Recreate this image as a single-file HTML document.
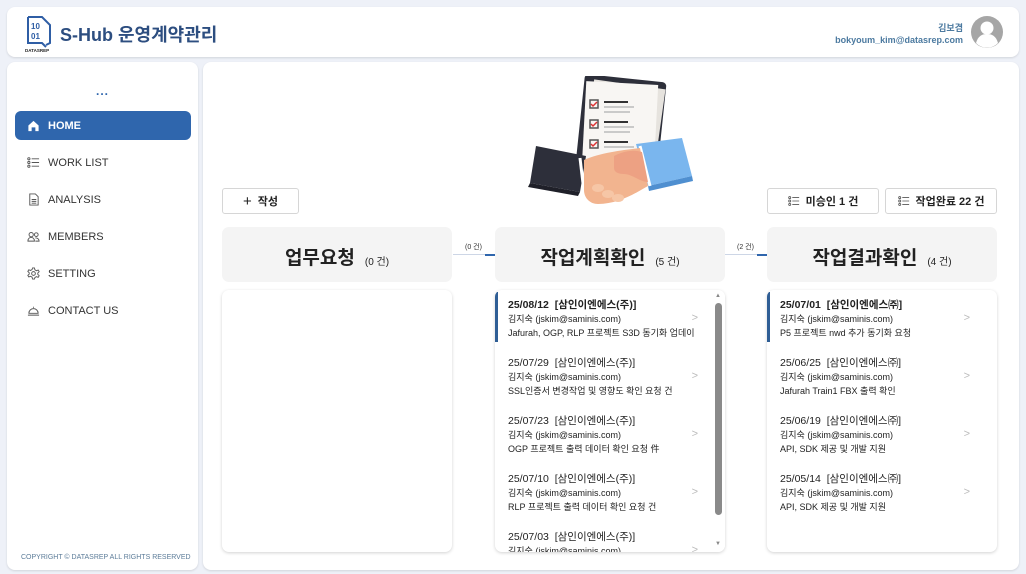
<!DOCTYPE html>
<html><head><meta charset="utf-8"><style>
*{box-sizing:border-box;margin:0;padding:0}
body{width:1026px;height:574px;background:#eef1f8;font-family:"Liberation Sans","Noto Sans CJK KR",sans-serif;position:relative;overflow:hidden;color:#222}
.card{position:absolute;background:#fff;border-radius:8px;box-shadow:0 1px 2px rgba(0,0,0,.12)}
.abs{position:absolute}
.nav{position:absolute;left:15px;width:176px;height:29px;display:flex;align-items:center;padding-left:12px;font-size:11px;color:#333;gap:8px}
.nav.on{background:#2f66ad;color:#fff;border-radius:6px;font-weight:bold}
.nav svg{width:13px;height:13px}
.btn{position:absolute;height:26px;border:1px solid #d6d6d6;border-radius:3px;background:#fff;display:flex;align-items:center;justify-content:center;font-size:11px;font-weight:bold;gap:6px}
.colh{position:absolute;width:230px;height:55px;background:#f4f4f4;border-radius:7px;display:flex;align-items:center;justify-content:center;font-size:19px;font-weight:bold;gap:10px;padding-top:4px}
.colh small{font-size:10px;font-weight:normal;margin-top:8px}
.list{position:absolute;width:230px;height:262px;top:290px;background:#fff;border-radius:7px;box-shadow:0 1px 3px rgba(0,0,0,.18);overflow:hidden}
.it{position:absolute;left:0;width:215px;height:58px;padding-left:13px;font-size:9px;color:#222}
.it b{font-size:10.5px;font-weight:normal}
.it .d{margin-top:8px;font-size:10.5px}
.it div{line-height:14px;white-space:nowrap;overflow:hidden}
.chev{position:absolute;right:12px;top:22px;color:#bbb;font-size:11px}
.cnt{position:absolute;font-size:7px;color:#333}
.ln{position:absolute;height:1px;background:#cdd6e6}
.ln i{position:absolute;right:0;top:-0.5px;width:10px;height:2px;background:#2f66ad}
</style></head><body>
<div class="card" style="left:7px;top:7px;width:1012px;height:50px">
 <svg class="abs" style="left:17px;top:8px" width="30" height="38" viewBox="0 0 30 38"><path d="M4 2h14l8 8v18l-4 2" fill="none" stroke="#2f5ea5" stroke-width="2"/><path d="M4 2v26h14l4 4" fill="none" stroke="#2f5ea5" stroke-width="2"/><text x="7" y="14" font-size="8" font-weight="bold" fill="#2f5ea5" font-family="Liberation Sans">10</text><text x="7" y="24" font-size="8" font-weight="bold" fill="#2f5ea5" font-family="Liberation Sans">01</text><text x="1" y="37" font-size="4.5" font-weight="bold" fill="#222" font-family="Liberation Sans">DATASREP</text></svg>
 <div class="abs" style="left:53px;top:14px;font-size:18px;font-weight:bold;color:#2d4e80">S-Hub 운영계약관리</div>
 <div class="abs" style="right:56px;top:15px;text-align:right;font-size:9px;font-weight:bold;color:#4c7aa0;line-height:12px">김보겸<br>bokyoum_kim@datasrep.com</div>
 <svg class="abs" style="right:16px;top:9px" width="32" height="32" viewBox="0 0 32 32"><circle cx="16" cy="16" r="16" fill="#a6a6a6"/><circle cx="16" cy="12" r="6.5" fill="#fff"/><path d="M5 27c2-7 6-9 11-9s9 2 11 9a15 15 0 0 1-22 0z" fill="#fff"/></svg>
</div>
<div class="card" style="left:7px;top:62px;width:191px;height:508px"></div>
<div class="abs" style="left:96px;top:84px;font-size:12px;color:#2f66ad;font-weight:bold;letter-spacing:1px">...</div>
<div class="nav on" style="top:111px"><svg viewBox="0 0 14 14"><path d="M1.5 7L7 2l5.5 5v6H9V9H5v4H1.5z" fill="#fff"/></svg>HOME</div>
<div class="nav" style="top:148px"><svg viewBox="0 0 14 14" fill="none" stroke="#555" stroke-width="1"><circle cx="2" cy="3" r="1.2"/><circle cx="2" cy="7" r="1.2"/><circle cx="2" cy="11" r="1.2"/><path d="M5 3h8M5 7h8M5 11h8"/></svg>WORK LIST</div>
<div class="nav" style="top:185px"><svg viewBox="0 0 14 14" fill="none" stroke="#555" stroke-width="1"><path d="M3 1h6l3 3v9H3z M5 7h5M5 9h5M5 11h5"/></svg>ANALYSIS</div>
<div class="nav" style="top:222px"><svg viewBox="0 0 14 14" fill="none" stroke="#555" stroke-width="1"><circle cx="4.5" cy="5" r="2.3"/><circle cx="10" cy="5" r="2"/><path d="M1 12c0-3 2-4 3.5-4S8 9 8 12zM9 8.5c2 0 4 1 4 3.5H9"/></svg>MEMBERS</div>
<div class="nav" style="top:259px"><svg viewBox="0 0 14 14" fill="none" stroke="#555" stroke-width="1"><circle cx="7" cy="7" r="2"/><path d="M6 1h2l.5 2 1.6 1 2-.7 1 1.7-1.5 1.5v1.4l1.5 1.5-1 1.7-2-.7-1.6 1L8 13H6l-.5-2-1.6-1-2 .7-1-1.7L2.4 7.6V6.2L.9 4.7l1-1.7 2 .7 1.6-1z"/></svg>SETTING</div>
<div class="nav" style="top:296px"><svg viewBox="0 0 14 14" fill="none" stroke="#555" stroke-width="1"><path d="M2 10a5 5 0 0 1 10 0zM1 12h12M7 4V3"/></svg>CONTACT US</div>
<div class="abs" style="left:21px;top:554px;font-size:7px;color:#5c7c99">COPYRIGHT © DATASREP ALL RIGHTS RESERVED</div>

<div class="card" style="left:203px;top:62px;width:816px;height:508px"></div>
<svg class="abs" style="left:528px;top:76px" width="170" height="135" viewBox="0 0 170 135">
 <rect x="52" y="2" width="82" height="92" rx="4" fill="#2d2f3a" transform="rotate(6 93 48)"/>
 <rect x="60" y="8" width="72" height="84" fill="#e6e3de" transform="rotate(8 96 50)"/>
 <rect x="56" y="7" width="72" height="86" fill="#f8f6f3" transform="rotate(3 92 50)"/>
 <g fill="none" stroke="#555" stroke-width="1.5"><rect x="62" y="24" width="8" height="8"/><rect x="62" y="44" width="8" height="8"/><rect x="62" y="64" width="8" height="8"/></g>
 <g stroke="#d33" stroke-width="1.5" fill="none"><path d="M63 28l2 2 4-4M63 48l2 2 4-4M63 68l2 2 4-4"/></g>
 <g stroke="#333" stroke-width="2"><path d="M76 26h24M76 46h24M76 66h24"/></g>
 <g stroke="#bbb" stroke-width="1.5"><path d="M76 31h30M76 51h30M76 71h30M76 36h26M76 56h26"/></g>
 <path d="M8 70l50 10-6 36-50-9z" fill="#2d2f3a"/>
 <path d="M2 107l50 9-2 4-50-9z" fill="#1f2029"/>
 <path d="M108 68l46-6 10 38-44 10z" fill="#7ab6ee"/>
 <path d="M120 110l44-10 1 5-44 10z" fill="#4f8fd0"/>
 <path d="M52 82l4 34" stroke="#fff" stroke-width="3"/>
 <path d="M112 70l10 40" stroke="#fff" stroke-width="3"/>
 <path d="M56 84c18-8 42-10 56-12l8 38c-14 8-30 18-50 18-8 0-14-6-14-14z" fill="#f2b48f"/>
 <path d="M86 80c12-6 22-6 28-4l6 30c-8 0-16-8-24-8-6 0-10-2-10-6z" fill="#eda183"/>
 <g fill="#f6c6a6"><ellipse cx="70" cy="112" rx="6" ry="4"/><ellipse cx="80" cy="118" rx="6" ry="4"/><ellipse cx="90" cy="122" rx="6" ry="4"/></g>
</svg>

<div class="btn" style="left:222px;top:188px;width:77px"><span style="font-size:15px;font-weight:normal">+</span>작성</div>
<div class="btn" style="left:767px;top:188px;width:112px"><svg width="12" height="12" viewBox="0 0 14 14" fill="none" stroke="#555"><circle cx="2" cy="3" r="1.2"/><circle cx="2" cy="7" r="1.2"/><circle cx="2" cy="11" r="1.2"/><path d="M5 3h8M5 7h8M5 11h8"/></svg>미승인 1 건</div>
<div class="btn" style="left:885px;top:188px;width:112px"><svg width="12" height="12" viewBox="0 0 14 14" fill="none" stroke="#555"><circle cx="2" cy="3" r="1.2"/><circle cx="2" cy="7" r="1.2"/><circle cx="2" cy="11" r="1.2"/><path d="M5 3h8M5 7h8M5 11h8"/></svg>작업완료 22 건</div>

<div class="colh" style="left:222px;top:227px">업무요청<small>(0 건)</small></div>
<div class="colh" style="left:495px;top:227px">작업계획확인<small>(5 건)</small></div>
<div class="colh" style="left:767px;top:227px">작업결과확인<small>(4 건)</small></div>
<div class="ln" style="left:453px;top:254px;width:42px"><i></i></div>
<div class="cnt" style="left:465px;top:242px">(0 건)</div>
<div class="ln" style="left:725px;top:254px;width:42px"><i></i></div>
<div class="cnt" style="left:737px;top:242px">(2 건)</div>

<div class="list" style="left:222px"></div>
<div class="list" style="left:495px">
 <div class="abs" style="left:0;top:2px;width:3px;height:50px;background:#2f5e95"></div>
 <div class="it" style="top:0"><div class="d"><b style="font-weight:bold">25/08/12 &nbsp;[삼인이엔에스(주)]</b></div><div>김지숙 (jskim@saminis.com)</div><div>Jafurah, OGP, RLP 프로젝트 S3D 동기화 업데이</div><span class="chev">&gt;</span></div>
 <div class="it" style="top:58px"><div class="d">25/07/29 &nbsp;[삼인이엔에스(주)]</div><div>김지숙 (jskim@saminis.com)</div><div>SSL인증서 변경작업 및 영향도 확인 요청 건</div><span class="chev">&gt;</span></div>
 <div class="it" style="top:116px"><div class="d">25/07/23 &nbsp;[삼인이엔에스(주)]</div><div>김지숙 (jskim@saminis.com)</div><div>OGP 프로젝트 출력 데이터 확인 요청 件</div><span class="chev">&gt;</span></div>
 <div class="it" style="top:174px"><div class="d">25/07/10 &nbsp;[삼인이엔에스(주)]</div><div>김지숙 (jskim@saminis.com)</div><div>RLP 프로젝트 출력 데이터 확인 요청 건</div><span class="chev">&gt;</span></div>
 <div class="it" style="top:232px"><div class="d">25/07/03 &nbsp;[삼인이엔에스(주)]</div><div>김지숙 (jskim@saminis.com)</div><span class="chev">&gt;</span></div>
 <div class="abs" style="left:219px;top:0;width:11px;height:262px;background:#fff"></div>
 <div class="abs" style="left:220px;top:13px;width:7px;height:212px;background:#8a8a8a;border-radius:4px"></div>
 <div class="abs" style="left:220px;top:3px;font-size:6px;color:#888">▲</div>
 <div class="abs" style="left:220px;top:251px;font-size:6px;color:#888">▼</div>
</div>
<div class="list" style="left:767px">
 <div class="abs" style="left:0;top:2px;width:3px;height:50px;background:#2f5e95"></div>
 <div class="it" style="top:0"><div class="d"><b style="font-weight:bold">25/07/01 &nbsp;[삼인이엔에스㈜]</b></div><div>김지숙 (jskim@saminis.com)</div><div>P5 프로젝트 nwd 추가 동기화 요청</div><span class="chev">&gt;</span></div>
 <div class="it" style="top:58px"><div class="d">25/06/25 &nbsp;[삼인이엔에스㈜]</div><div>김지숙 (jskim@saminis.com)</div><div>Jafurah Train1 FBX 출력 확인</div><span class="chev">&gt;</span></div>
 <div class="it" style="top:116px"><div class="d">25/06/19 &nbsp;[삼인이엔에스㈜]</div><div>김지숙 (jskim@saminis.com)</div><div>API, SDK 제공 및 개발 지원</div><span class="chev">&gt;</span></div>
 <div class="it" style="top:174px"><div class="d">25/05/14 &nbsp;[삼인이엔에스㈜]</div><div>김지숙 (jskim@saminis.com)</div><div>API, SDK 제공 및 개발 지원</div><span class="chev">&gt;</span></div>
</div>
</body></html>
